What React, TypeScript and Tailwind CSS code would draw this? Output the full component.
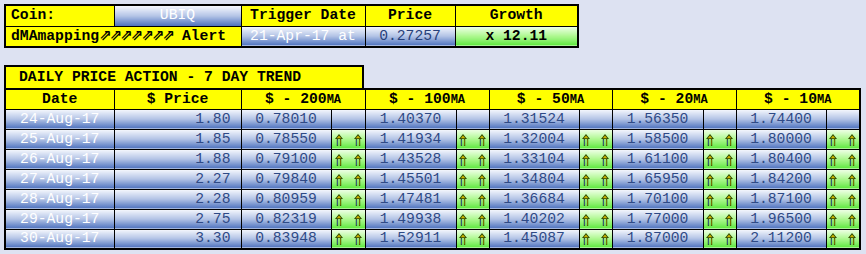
import React from "react";

const blue = "bg-linear-to-b from-[#f6f8fd] via-[#b4c4e6] to-[#4f72bd]";
const green = "bg-linear-to-b from-[#f0ffe8] via-[#aef890] to-[#5ae83a]";
const yellow = "bg-[#ffff00]";
const bd = "border border-black";

const rows = [
  ["24-Aug-17", "1.80", "0.78010", "1.40370", "1.31524", "1.56350", "1.74400"],
  ["25-Aug-17", "1.85", "0.78550", "1.41934", "1.32004", "1.58500", "1.80000"],
  ["26-Aug-17", "1.88", "0.79100", "1.43528", "1.33104", "1.61100", "1.80400"],
  ["27-Aug-17", "2.27", "0.79840", "1.45501", "1.34804", "1.65950", "1.84200"],
  ["28-Aug-17", "2.28", "0.80959", "1.47481", "1.36684", "1.70100", "1.87100"],
  ["29-Aug-17", "2.75", "0.82319", "1.49938", "1.40202", "1.77000", "1.96500"],
  ["30-Aug-17", "3.30", "0.83948", "1.52911", "1.45087", "1.87000", "2.11200"],
];

const MA = ({ n }: { n: string }) => (
  <>
    $ - {n}
    <span className="text-[12px]">MA</span>
  </>
);

const UpArrow = () => (
  <svg width="8" height="12" viewBox="0 0 8 12">
    <path d="M4 0 L8 5 L6.2 5 L6.2 12 L4.9 12 L4.9 5 L3.1 5 L3.1 12 L1.8 12 L1.8 5 L0 5 Z" fill="#2e4a00" />
    <path d="M4 1.6 L6.3 4.3 L1.7 4.3 Z" fill="#c9b100" />
    <line x1="2.45" y1="5.5" x2="2.45" y2="11.5" stroke="#3b6fd0" strokeWidth="0.6" />
    <line x1="5.55" y1="5.5" x2="5.55" y2="11.5" stroke="#a89000" strokeWidth="0.6" />
  </svg>
);

const Arrows = () => (
  <div className="flex justify-center items-center gap-[11px] pt-[1px]">
    <UpArrow />
    <UpArrow />
  </div>
);

export default function App() {
  return (
    <div className="w-[866px] h-[254px] bg-[#dde2f2] pt-[4px] pl-[4px] font-['Liberation_Mono','Courier_New',monospace] text-[14.7px] leading-none overflow-hidden">
      <table className="table-fixed w-[573px] border-collapse border-2 border-black">
        <colgroup>
          <col className="w-[109px]" />
          <col className="w-[127px]" />
          <col className="w-[124px]" />
          <col className="w-[90px]" />
          <col className="w-[123px]" />
        </colgroup>
        <tbody>
          <tr className="h-[21px]">
            <td className={`${bd} ${yellow} pl-[5px] font-bold text-black`}>Coin:</td>
            <td className={`${bd} ${blue} text-center text-white`}>UBIQ</td>
            <td className={`${bd} ${yellow} text-center font-bold`}>Trigger Date</td>
            <td className={`${bd} ${yellow} text-center font-bold`}>Price</td>
            <td className={`${bd} ${yellow} text-center font-bold`}>Growth</td>
          </tr>
          <tr className="h-[21px]">
            <td colSpan={2} className={`${bd} ${yellow} pl-[5px] font-bold text-black whitespace-nowrap`}>
              dMAmapping
              <span className="font-['DejaVu_Sans',sans-serif] text-[15px] tracking-[-2px]">⇗⇗⇗⇗⇗⇗⇗</span> Alert
            </td>
            <td className={`${bd} ${blue} text-center text-white whitespace-nowrap`}>21-Apr-17 at</td>
            <td className={`${bd} ${blue} text-center text-[#27407a]`}>0.27257</td>
            <td className={`${bd} ${green} text-center font-bold text-black`}>x 12.11</td>
          </tr>
        </tbody>
      </table>

      <div className="mt-[17px] w-[360px] h-[23px] border-2 border-b-0 border-black bg-[#ffff00] pl-[13px] flex items-center font-bold text-black whitespace-nowrap">
        DAILY PRICE ACTION - 7 DAY TREND
      </div>
      <table className="table-fixed w-[855px] border-collapse border-2 border-black">
        <colgroup>
          <col className="w-[109px]" />
          <col className="w-[127px]" />
          <col className="w-[90px]" />
          <col className="w-[34px]" />
          <col className="w-[91px]" />
          <col className="w-[33px]" />
          <col className="w-[90px]" />
          <col className="w-[33px]" />
          <col className="w-[91px]" />
          <col className="w-[33px]" />
          <col className="w-[90px]" />
          <col className="w-[34px]" />
        </colgroup>
        <tbody>
          <tr className="h-[20px] font-bold text-black">
            <td className={`${bd} ${yellow} text-center`}>Date</td>
            <td className={`${bd} ${yellow} text-center`}>$ Price</td>
            <td colSpan={2} className={`${bd} ${yellow} text-center`}><MA n="200" /></td>
            <td colSpan={2} className={`${bd} ${yellow} text-center`}><MA n="100" /></td>
            <td colSpan={2} className={`${bd} ${yellow} text-center`}><MA n="50" /></td>
            <td colSpan={2} className={`${bd} ${yellow} text-center`}><MA n="20" /></td>
            <td colSpan={2} className={`${bd} ${yellow} text-center`}><MA n="10" /></td>
          </tr>
          {rows.map((r, i) => (
            <tr key={r[0]} className="h-[20px]">
              <td className={`${bd} ${blue} text-center text-white`}>{r[0]}</td>
              <td className={`${bd} ${blue} text-right pr-[10px] text-[#2f4a86]`}>{r[1]}</td>
              {r.slice(2).map((v, j) => (
                <React.Fragment key={j}>
                  <td className={`${bd} ${blue} text-center text-[#2f4a86]`}>{v}</td>
                  <td className={`${bd} ${i === 0 ? blue : green} p-0`}>
                    {i === 0 ? null : <Arrows />}
                  </td>
                </React.Fragment>
              ))}
            </tr>
          ))}
        </tbody>
      </table>
    </div>
  );
}
